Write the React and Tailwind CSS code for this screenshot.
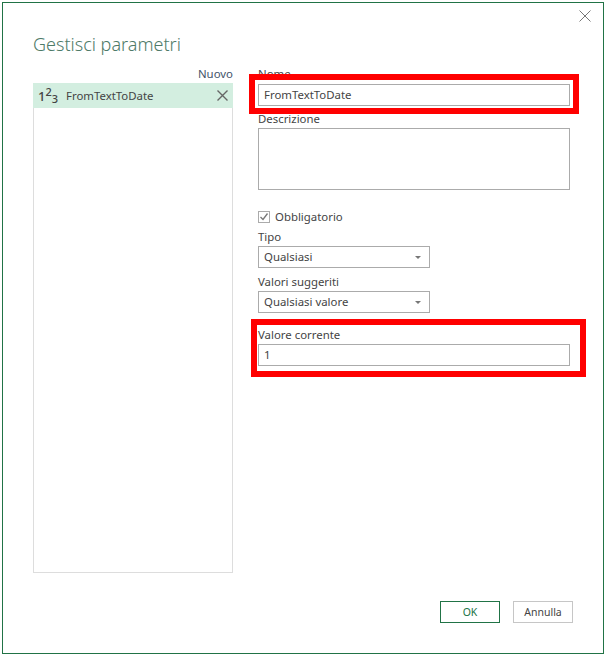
import React from 'react';

const fieldClass = 'h-[22px] border border-[#ababab] bg-white pl-[5px] flex items-center text-[11.4px] text-[#444444]';

const labelClass = 'h-[15px] leading-[15px] text-[11.4px] text-[#444444]';

const Select = ({ value }) => (
  <div className={`${fieldClass} w-[172px] justify-between pr-[8px]`}>
    <span>{value}</span>
    <svg width="6" height="3" viewBox="0 0 6 3"><path d="M0 0h6L3 3z" fill="#777777" /></svg>
  </div>
);

const App = () => {
  return (
    <div className="w-[606px] h-[656px] bg-white p-[2px] font-['Noto_Sans','Open_Sans',sans-serif]">
      <div className="relative w-[602px] h-[652px] border border-[#217346] bg-white pl-[30px] pr-[33px]">
        <button className="absolute top-[7px] right-[12px] text-[#777777]">
          <svg width="12" height="12" viewBox="0 0 12 12" className="block">
            <path d="M0.5 0.5l11 11M11.5 0.5l-11 11" stroke="#777777" strokeWidth="1" fill="none" />
          </svg>
        </button>

        <h1 className="pt-[28px] h-[67px] leading-[26px] text-[18px] font-light text-[#4e7a68]">Gestisci parametri</h1>

        <div className="flex">
          <div className="w-[200px] shrink-0">
            <div className="h-[13px] -mt-[3px] flex justify-end items-end text-[11.4px] leading-[13px] text-[#44546a]">Nuovo</div>
            <div className="h-[490px] mt-[3px] border border-[#dddddd] border-t-0">
              <div className="h-[25px] -mx-px bg-[#d3eee0] flex items-center pl-[5px] pr-[5px] text-[11.4px] text-[#444444]">
                <span className="w-[28px] mt-[2px] text-[13px] leading-none font-medium text-[#444444] flex items-start">
                  1<span className="text-[11px] -mt-[4px]">2</span><span className="text-[11px] mt-[3px]">3</span>
                </span>
                <span className="flex-1 mt-[1px]">FromTextToDate</span>
                <svg width="11" height="11" viewBox="0 0 11 11">
                  <path d="M0.5 0.5l10 10M10.5 0.5l-10 10" stroke="#666666" strokeWidth="1.4" fill="none" />
                </svg>
              </div>
            </div>
          </div>

          <div className="ml-[25px] flex-1 flex flex-col">
            <div className={`${labelClass} -mt-[4px]`}>Nome</div>
            <div className={`${fieldClass} mt-[3px]`}>FromTextToDate</div>
            <div className={`${labelClass} mt-[5px]`}>Descrizione</div>
            <div className="h-[62px] mt-[2px] border border-[#ababab] bg-white"></div>

            <div className="mt-[21px] h-[12px] flex items-center gap-[5px] text-[11.4px] text-[#444444]">
              <span className="w-[12px] h-[12px] border border-[#ababab] flex items-center justify-center">
                <svg width="10" height="10" viewBox="0 0 10 10">
                  <path d="M1.5 5l2.5 2.5 4.5-6" stroke="#777777" strokeWidth="1.3" fill="none" />
                </svg>
              </span>
              Obbligatorio
            </div>

            <div className={`${labelClass} mt-[6px]`}>Tipo</div>
            <div className="mt-[2px]"><Select value="Qualsiasi" /></div>
            <div className={`${labelClass} mt-[6px]`}>Valori suggeriti</div>
            <div className="mt-[2px]"><Select value="Qualsiasi valore" /></div>
            <div className={`${labelClass} mt-[14px]`}>Valore corrente</div>
            <div className={`${fieldClass} mt-[2px]`}>1</div>
          </div>
        </div>

        <div className="absolute left-[246px] top-[71px] w-[330px] h-[40px] border-[6px] border-[#ff0000] pointer-events-none"></div>
        <div className="absolute left-[248px] top-[316px] w-[335px] h-[58px] border-[6px] border-[#ff0000] pointer-events-none"></div>

        <div className="absolute right-[30px] bottom-[30px] flex gap-[13px] text-[10.5px]">
          <button className="w-[60px] h-[22px] pt-px border border-[#217346] text-[#217346]">OK</button>
          <button className="w-[60px] h-[22px] pt-px border border-[#c6c6c6] text-[#444444]">Annulla</button>
        </div>
      </div>
    </div>
  );
};

export default App;
